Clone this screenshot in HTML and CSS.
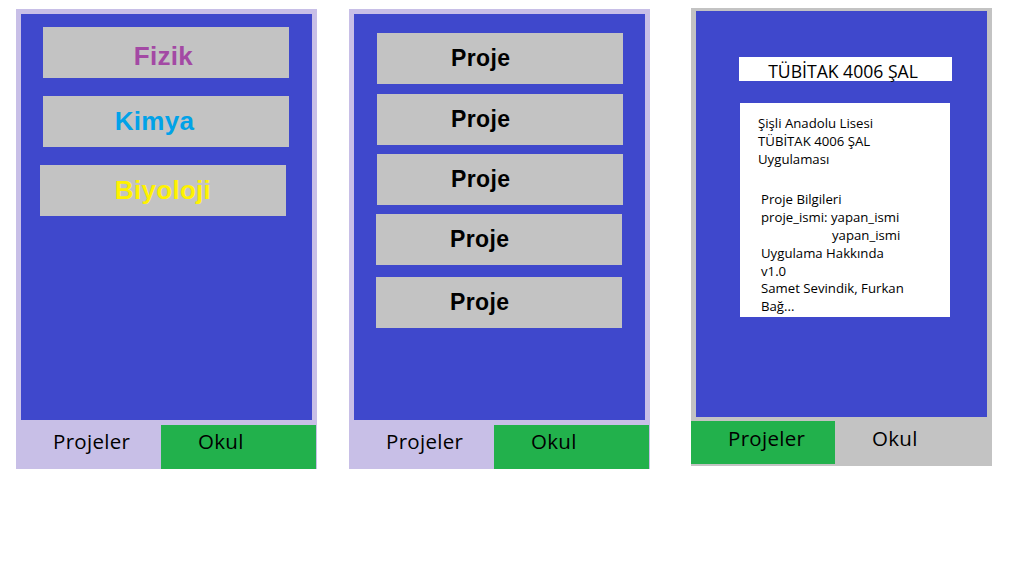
FILE: index.html
```html
<!DOCTYPE html>
<html lang="tr">
<head>
<meta charset="utf-8">
<title>TÜBİTAK 4006 ŞAL</title>
<link rel="stylesheet" href="styles.css">
</head>
<body>
<div class="board">
  <div class="phone">
    <div class="screen">
      <div class="subj subj--fizik">Fizik</div>
      <div class="subj subj--kimya">Kimya</div>
      <div class="subj subj--biyoloji">Biyoloji</div>
    </div>
    <div class="tabbar">
      <div class="tab tab--left">Projeler</div>
      <div class="tab tab--right tab--green">Okul</div>
    </div>
  </div>

  <div class="phone phone--second">
    <div class="screen">
      <div class="proje proje--1">Proje</div>
      <div class="proje proje--2">Proje</div>
      <div class="proje proje--3">Proje</div>
      <div class="proje proje--4">Proje</div>
      <div class="proje proje--5">Proje</div>
    </div>
    <div class="tabbar">
      <div class="tab tab--left">Projeler</div>
      <div class="tab tab--right tab--green">Okul</div>
    </div>
  </div>

  <div class="phone phone--gray">
    <div class="screen">
      <div class="title">TÜBİTAK 4006 ŞAL</div>
      <div class="info">
        <div class="info-block">
          <div>Şişli Anadolu Lisesi</div>
          <div>TÜBİTAK 4006 ŞAL</div>
          <div>Uygulaması</div>
        </div>
        <div class="info-block info-block--second">
          <div>Proje Bilgileri</div>
          <div>proje_ismi: yapan_ismi</div>
          <div class="indent">yapan_ismi</div>
          <div>Uygulama Hakkında</div>
          <div>v1.0</div>
          <div>Samet Sevindik, Furkan</div>
          <div>Bağ...</div>
        </div>
      </div>
    </div>
    <div class="tabbar tabbar--gray">
      <div class="tab tab--left tab--green tab--short">Projeler</div>
      <div class="tab tab--right tab--wide">Okul</div>
    </div>
  </div>
</div>
</body>
</html>
```

FILE: styles.css
```css
html, body {
  margin: 0;
  background: #ffffff;
}

body {
  font-family: "Open Sans", "Noto Sans", sans-serif;
  color: #000000;
}

.board {
  display: flex;
  align-items: flex-start;
  padding: 9px 0 0 16px;
}

.phone {
  width: 301px;
  box-sizing: border-box;
  background: #c8bfe7;
  padding-top: 5px;
}

.phone--second {
  margin-left: 32px;
}

.phone--gray {
  margin-left: 41px;
  margin-top: -1px;
  padding-top: 3px;
  background: #c3c3c3;
}

.screen {
  margin: 0 5px;
  height: 406px;
  background: #3f48cc;
  display: flex;
  flex-direction: column;
  align-items: flex-start;
  overflow: hidden;
}

/* subject buttons */
.subj {
  width: 246px;
  height: 51px;
  box-sizing: border-box;
  background: #c3c3c3;
  font-family: "Liberation Sans", Arial, sans-serif;
  font-weight: bold;
  font-size: 26px;
  line-height: 51px;
  text-align: center;
  letter-spacing: 0.3px;
}

.subj--fizik {
  margin: 13px 0 0 22px;
  padding: 8px 5px 0 0;
  line-height: 42px;
  color: #a349a4;
}

.subj--kimya {
  margin: 18px 0 0 22px;
  padding-right: 23px;
  color: #00a2e8;
}

.subj--biyoloji {
  margin: 18px 0 0 19px;
  color: #fff200;
}

/* project buttons */
.proje {
  width: 246px;
  height: 51px;
  box-sizing: border-box;
  background: #c3c3c3;
  font-family: "Liberation Sans", Arial, sans-serif;
  font-weight: bold;
  font-size: 23px;
  line-height: 51px;
  letter-spacing: 0.4px;
  padding-left: 74px;
}

.proje--1 { margin: 19px 0 0 23px; }
.proje--2 { margin: 10px 0 0 23px; }
.proje--3 { margin: 9px 0 0 23px; }
.proje--4 { margin: 9px 0 0 22px; }
.proje--5 { margin: 12px 0 0 22px; }

/* tab bar */
.tabbar {
  display: flex;
  height: 49px;
  box-sizing: border-box;
  padding-top: 5px;
}

.tabbar--gray {
  padding-top: 4px;
}

.tab {
  height: 44px;
  box-sizing: border-box;
  padding: 2px 0 0 37px;
  font-size: 20.5px;
  line-height: 28px;
  letter-spacing: 0.3px;
}

.tab--left {
  width: 145px;
}

.tab--right {
  width: 155px;
}

.tab--green {
  background: #22b14c;
}

.tabbar--gray .tab {
  height: 43px;
  padding-top: 3px;
}

.tab--short {
  width: 144px;
}

.tab--wide {
  width: 157px;
}

/* info screen */
.title {
  margin: 46px 0 0 43px;
  width: 213px;
  height: 24px;
  box-sizing: border-box;
  background: #ffffff;
  padding: 3px 5px 0 0;
  font-size: 17.6px;
  line-height: 22px;
  text-align: center;
}

.info {
  margin: 22px 0 0 44px;
  width: 210px;
  height: 214px;
  box-sizing: border-box;
  background: #ffffff;
  padding: 12px 0 0 18px;
  font-size: 13.2px;
  line-height: 17.8px;
}

.info-block--second {
  margin-top: 23px;
  padding-left: 3px;
}

.indent {
  padding-left: 71px;
}
```
